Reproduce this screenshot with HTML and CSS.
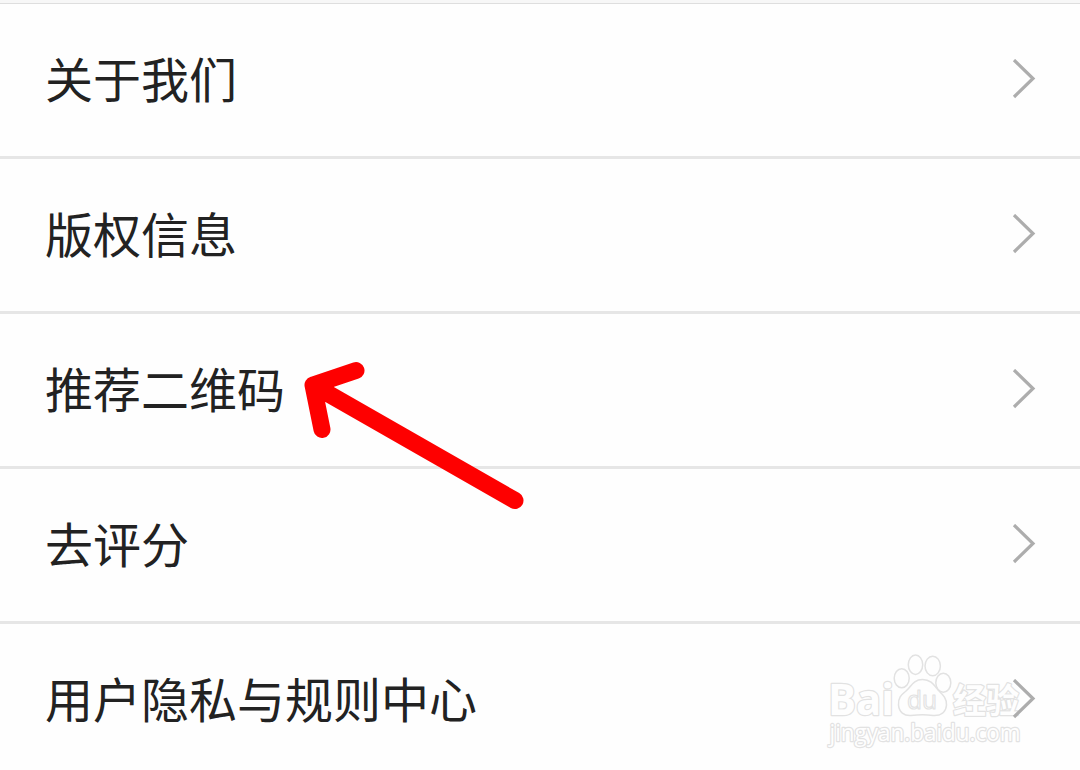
FILE: index.html
```
<!DOCTYPE html>
<html lang="zh-CN">
<head>
  <meta charset="utf-8">
  <title>关于</title>
  <link rel="stylesheet" href="styles.css">
</head>
<body>
  <div class="page">
    <div class="top-bar"></div>

    <!-- Settings list -->
    <ul class="menu">
      <li class="menu-item">
        <span class="menu-label">关于我们</span>
        <svg class="chevron" viewBox="0 0 24 40"><path d="M2 1 L21 19.500 L2 38"/></svg>
      </li>
      <li class="menu-item">
        <span class="menu-label">版权信息</span>
        <svg class="chevron" viewBox="0 0 24 40"><path d="M2 1 L21 19.500 L2 38"/></svg>
      </li>
      <li class="menu-item">
        <span class="menu-label">推荐二维码</span>
        <svg class="chevron" viewBox="0 0 24 40"><path d="M2 1 L21 19.500 L2 38"/></svg>
      </li>
      <li class="menu-item">
        <span class="menu-label">去评分</span>
        <svg class="chevron" viewBox="0 0 24 40"><path d="M2 1 L21 19.500 L2 38"/></svg>
      </li>
      <li class="menu-item">
        <span class="menu-label">用户隐私与规则中心</span>
        <svg class="chevron" viewBox="0 0 24 40"><path d="M2 1 L21 19.500 L2 38"/></svg>
      </li>
    </ul>

    <!-- Arrow pointing at the QR code row -->
    <svg class="arrow" viewBox="0 0 260 180">
      <path d="M76 30.5 L33 45 L42 89.5 M33 45 L235 160.5"/>
      <path class="arrow-fill" d="M33 45 L50 42 L42 57 Z"/>
    </svg>

    <!-- Watermark -->
    <svg class="watermark" viewBox="0 0 250 120">
      <text class="mark-latin" x="18" y="74.500" textLength="66" lengthAdjust="spacingAndGlyphs">Bai</text>
      <ellipse cx="91.7" cy="38.3" rx="7.5" ry="9.5"/>
      <ellipse cx="105.5" cy="24.7" rx="7.2" ry="9.7"/>
      <ellipse cx="122.7" cy="26" rx="7.7" ry="9.7"/>
      <ellipse cx="133.3" cy="42.8" rx="7.5" ry="9.5"/>
      <path d="M112.500 39.500 C103 39.500 101 47 96 51 C91 55 88 58 88.500 65 C89 72 94 76 101 75.500 C108 74.500 117 74.500 123 75.500 C131 76 136 72 136.500 65 C137 58 132 54 128 50 C124 45 121 39.500 112.500 39.500 Z"/>
      <text class="mark-du" x="97" y="69" textLength="30" lengthAdjust="spacingAndGlyphs">du</text>
      <text class="mark-cjk" x="143" y="73" textLength="66" lengthAdjust="spacingAndGlyphs">经验</text>
      <text class="mark-url" x="19.500" y="100.500" textLength="191" lengthAdjust="spacingAndGlyphs">jingyan.baidu.com</text>
    </svg>
  </div>
</body>
</html>
```
FILE: styles.css
```
* {
  box-sizing: border-box;
}
body {
  margin: 0;
  background: #fefefe;
  font-family: "Noto Sans CJK SC", sans-serif;
}
.page {
  position: relative;
  height: 770px;
  overflow: hidden;
}
.top-bar {
  height: 4px;
  background: #f7f7f7;
  border-bottom: 1px solid #dedede;
}
.menu {
  margin: 0;
  padding: 0;
  list-style: none;
}
.menu-item {
  display: flex;
  align-items: center;
  justify-content: space-between;
  height: 155px;
  padding: 0 44px 3px 45px;
  border-bottom: 3px solid #e6e6e6;
}
.menu-label {
  padding-bottom: 4px;
  color: #222;
  font-size: 48px;
  line-height: 70px;
}
.chevron {
  position: relative;
  z-index: 2;
  width: 24px;
  height: 40px;
  fill: none;
  stroke: #adadad;
  stroke-width: 3.2;
}
.arrow {
  position: absolute;
  left: 280px;
  top: 340px;
  width: 260px;
  height: 180px;
  fill: none;
  stroke: #fe0000;
  stroke-width: 17;
  stroke-linecap: round;
  stroke-linejoin: round;
}
.arrow-fill {
  fill: #fe0000;
  stroke-width: 6;
}
.watermark {
  position: absolute;
  left: 810px;
  top: 640px;
  width: 250px;
  height: 120px;
  fill: #fefefe;
  stroke: #e2e2e2;
  stroke-width: 1.5;
}
.watermark text {
  paint-order: stroke;
  stroke-width: 2.4;
  stroke-linejoin: round;
}
.mark-latin {
  font: bold 43px "Open Sans", sans-serif;
}
.watermark .mark-du {
  font: 26px "Open Sans", sans-serif;
  paint-order: normal;
  stroke-width: 1.2;
}
.mark-cjk {
  font: bold 34px "Noto Sans CJK SC", sans-serif;
}
.mark-url {
  font: 23px "Open Sans", sans-serif;
}
```
